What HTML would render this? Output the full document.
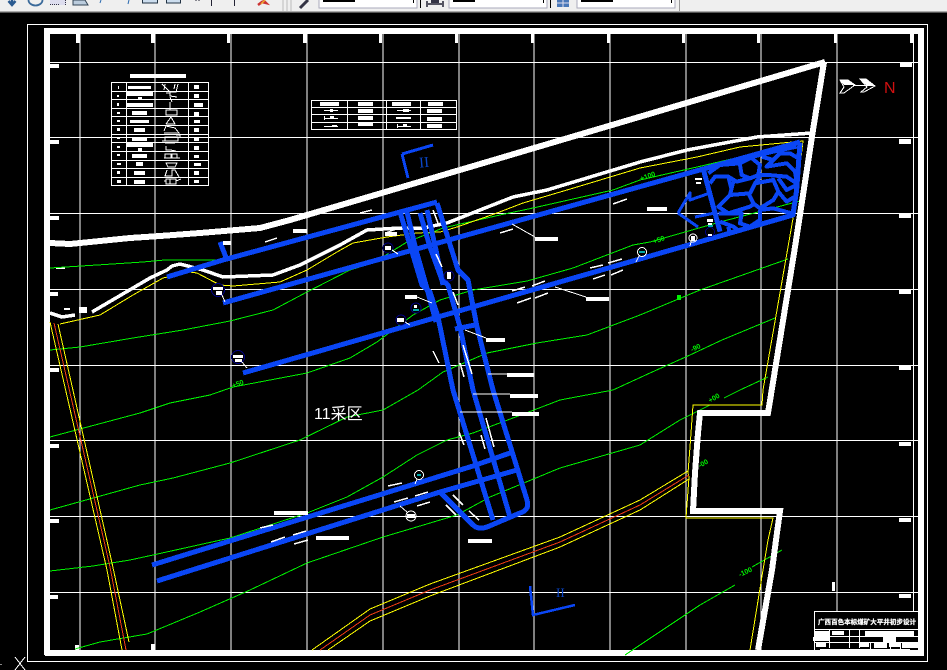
<!DOCTYPE html>
<html><head><meta charset="utf-8"><style>
html,body{margin:0;padding:0;background:#000;width:947px;height:670px;overflow:hidden}
svg{display:block}
path,rect,circle{shape-rendering:crispEdges}
.aa path,.aa rect{shape-rendering:auto}
text{font-family:"Liberation Sans","Noto Sans CJK SC",sans-serif}
</style></head><body>
<svg width="947" height="670" viewBox="0 0 947 670" xmlns="http://www.w3.org/2000/svg">
<rect width="947" height="670" fill="#000"/>
<!-- toolbar -->
<g class="aa">
<rect width="947" height="11" fill="#efefef"/>
<rect y="11" width="947" height="1" fill="#aaa"/>
<rect y="12" width="947" height="1" fill="#555"/>
<g fill="#fff" stroke="#aab" stroke-width="1">
<rect x="319" y="-2" width="98" height="10"/><rect x="449" y="-2" width="98" height="10"/><rect x="577" y="-2" width="98" height="10"/>
</g>
<rect x="679" y="0" width="1" height="11" fill="#999"/>
<g fill="#000"><rect x="323" y="0" width="32" height="2"/><rect x="453" y="0" width="22" height="2"/><rect x="581" y="0" width="32" height="2"/><rect x="413" y="0" width="1" height="3"/><rect x="543" y="0" width="1" height="3"/><rect x="671" y="0" width="1" height="3"/><rect x="420" y="0" width="1" height="8"/><rect x="550" y="0" width="1" height="8"/></g>
<path d="M12 0V4M8.5 1L12 5L15.5 1" stroke="#2a5a90" stroke-width="2.5" fill="none"/>
<path d="M28.5 0A7 5.5 0 0 0 42.5 0" stroke="#3a6a9a" stroke-width="1.8" fill="none"/>
<rect x="50" y="0" width="16" height="5" fill="#dde"/><path d="M50 4.5H60M65.5 0V5" stroke="#334" stroke-dasharray="1 1" stroke-width="1" fill="none"/>
<path d="M73 0H85L88 5H73Z" fill="#bcd" stroke="#345" stroke-width="1"/>
<path d="M101 0L100 3M129 0L128 4" stroke="#2a6ab0" stroke-width="1" fill="none"/>
<rect x="142.5" y="-2" width="15" height="5" fill="#cde" stroke="#234"/><rect x="166.5" y="-2" width="14" height="5" fill="#cde" stroke="#234"/>
<path d="M196 0V1M199 0V1M211.5 0V6M234.5 0V6" stroke="#223" stroke-width="1" fill="none"/>
<path d="M258 5L262 2L266 3L263 0" stroke="#c33" stroke-width="2.5" fill="none"/><path d="M261 4L265 0" stroke="#ea3" stroke-width="1.5" fill="none"/>
<path d="M283 0V11M287 0V11M291 0V11" stroke="#bbb" stroke-width="1" fill="none"/>
<path d="M300 8L308 0" stroke="#334" stroke-width="3" fill="none"/>
<path d="M427 1V7M443 1V7M428 4H442" stroke="#223" stroke-width="1.5" fill="none"/><rect x="431" y="0" width="8" height="3" fill="#334"/>
<rect x="557" y="0" width="12" height="7" fill="#4a78b8"/><path d="M557 3H569M563 0V7" stroke="#dde" stroke-width="1" fill="none"/>
</g>

<!-- grid -->
<g stroke="#fff" stroke-width="1" fill="none">
<path d="M80 34V650M155 34V650M231 34V650M307 34V650M383 34V650M459 34V650M534 34V650M610 34V650M686 34V650M761 34V650M837 34V650M913.5 34V650"/>
<path d="M50 62.5H918M50 137.5H918M50 213.5H918M50 289.5H918M50 365.5H918M50 440.5H918M50 516.5H918M50 592.5H918"/>
<rect x="27.5" y="24.5" width="900" height="637"/>
</g>
<!-- thick frame -->
<rect x="44" y="28" width="880" height="6" fill="#fff"/>
<rect x="44" y="28" width="6" height="627" fill="#fff"/>
<rect x="918" y="28" width="6" height="627" fill="#fff"/>
<rect x="45" y="650" width="879" height="6" fill="#fff"/>
<!-- ticks -->
<g fill="#fff">
<rect x="76" y="34" width="4" height="9"/><rect x="151" y="34" width="4" height="9"/><rect x="227" y="34" width="3" height="9"/><rect x="303" y="34" width="4" height="9"/><rect x="379" y="34" width="3" height="9"/><rect x="455" y="34" width="3" height="9"/><rect x="531" y="34" width="3" height="9"/><rect x="607" y="34" width="3" height="9"/><rect x="682" y="34" width="3" height="9"/><rect x="757" y="34" width="3" height="9"/><rect x="834" y="34" width="3" height="9"/><rect x="910" y="34" width="3" height="9"/>
<rect x="50" y="64" width="9" height="4"/><rect x="50" y="140" width="9" height="4"/><rect x="50" y="216" width="9" height="4"/><rect x="50" y="292" width="8" height="4"/><rect x="50" y="368" width="9" height="4"/><rect x="50" y="444" width="9" height="4"/><rect x="50" y="519" width="9" height="4"/><rect x="50" y="595" width="8" height="4"/>
<rect x="900" y="63" width="12" height="4"/><rect x="899" y="139" width="12" height="5"/><rect x="899" y="214" width="12" height="4"/><rect x="899" y="290" width="12" height="4"/><rect x="899" y="366" width="12" height="4"/><rect x="899" y="442" width="12" height="4"/><rect x="899" y="518" width="12" height="4"/><rect x="899" y="594" width="12" height="4"/>
<rect x="75" y="645" width="4" height="5"/><rect x="151" y="644" width="4" height="6"/><rect x="832" y="582" width="3" height="9"/>
<rect x="56" y="267" width="9" height="2"/><rect x="79" y="307" width="8" height="6"/><rect x="64" y="308" width="6" height="2"/>
</g>

<!-- green contours -->
<g stroke="#00f000" stroke-width="1" fill="none">
<path d="M50 268L97 265L143 262L165 260H217"/>
<path d="M50 350L80 347L133 338L183 330L230 321L273 310L307 292L350 270L373 263L407 242L443 228L500 215L533 208L613 190L640 180L697 167L800 143"/>
<path d="M50 437L140 413L170 403L210 395L233 387L307 373L350 358L377 342L413 315L440 300L473 290L527 281L573 268L633 245L650 242L720 222L800 201"/>
<path d="M50 510L140 485L173 478L230 463L300 440L347 417L383 410L418 390L443 372L487 353L537 343L587 335L640 315L700 290L788 259"/>
<path d="M50 571L93 566L130 560L153 555L230 538L307 513L347 497L383 477L417 455L447 440L473 433L513 418L560 400L613 390L650 373L690 355L722 340L775 318"/>
<path d="M75 649L100 642L147 634L200 612L250 590L307 563L383 537L457 515L490 497L560 468L640 445L680 420L710 405M724 398L740 390L768 377"/>
<path d="M625 655L700 605L735 585M752 567L782 550"/>
</g>
<g font-size="7" fill="#00f000" font-weight="bold">
<text x="641" y="181" transform="rotate(-20 641 181)">+100</text>
<text x="654" y="244" transform="rotate(-20 654 244)">+50</text>
<text x="233" y="388" transform="rotate(-20 233 388)">+50</text>
<text x="692" y="352" transform="rotate(-25 692 352)">-90</text>
<text x="710" y="403" transform="rotate(-30 710 403)">+00</text>
<text x="700" y="468" transform="rotate(-30 700 468)">-00</text>
<text x="740" y="577" transform="rotate(-25 740 577)">-100</text>
</g>
<rect x="677" y="295" width="4" height="5" fill="#00f000"/>

<!-- yellow -->
<g stroke="#ffff00" stroke-width="1" fill="none">
<path d="M60 324L100 315L133 295L163 278L190 272L197 273L220 285L233 286L280 282L307 270L337 252L353 243L387 237L417 233L440 232L457 227L497 213L523 203L567 190L640 168L697 157L740 147L803 141L795 207L788 247L763 390L762 405H693L690 447L688 473L689 477L686 518H773L768 540L763 570L750 650"/>
<path d="M50 322L107 570L122 650"/>
<path d="M58 324L112 563L129 642"/>
<path d="M688 471L640 500L560 537L430 584L370 609L312 650"/>
<path d="M689 479L640 510L560 547L430 596L370 621L328 650"/>
</g>
<g stroke="#f03c14" stroke-width="1" fill="none">
<path d="M54 323L110 567L126 650"/>
<path d="M689 475L640 505L560 542L430 590L370 615L320 650"/>
</g>

<!-- white boundary -->
<g stroke="#fff" fill="none" stroke-linejoin="miter">
<path stroke-width="6" d="M50 243L70 244L100 241L130 238L160 236L200 233L260 228L290 220L375 195L470 167L825 62"/>
<path stroke-width="6" d="M824 62L813 130L795 247L768 413H700L698 433L695 473L693 511H780L776 540L772 570L758 650"/>
<path stroke-width="3.5" d="M812 133L757 137L687 150L640 162L547 190L513 197L480 210L447 223L423 228L400 228L367 230L340 245L300 265L273 275L223 277L203 270L180 264L172 266L167 270L150 278L92 312M50 313L62 317L75 315"/>
</g>

<!-- blue drifts -->
<g stroke="#0a46f5" fill="none" stroke-width="5" stroke-linejoin="round" stroke-linecap="butt">
<path d="M167 277L223 260L437 202"/>
<path d="M220 242L227 260"/>
<path d="M223 303L800 142"/>
<path d="M243 373L793 215"/>
<path d="M400 212L422 285L430 292L438 317L453 390L493 520"/>
<path d="M420 213L430 247L442 280L448 285L460 327L473 390L510 517"/>
<path d="M437 203L458 270L468 280L477 327L493 390L527 500Q530 510 520 513L487 527Q478 530 473 525L440 492"/>
<path d="M407 212L416 250L426 285L436 322M427 210L436 250L443 285"/>
<path d="M455 329L475 325"/>
<path d="M510 453L473 466L152 565"/>
<path d="M517 470L440 492L157 581"/>
<path d="M678 213L690 193L690 200L710 193M678 213L698 227M695 217L715 213" stroke-width="3"/>
</g>
<!-- mesh -->
<g transform="translate(640 50) scale(.3333)" stroke="#0a46f5" fill="none" stroke-width="12" stroke-linejoin="round">
<path stroke-width="15" d="M190 358L240 545M480 278L470 420L458 500"/>
<path d="M205 370L240 345L300 340L340 320L400 305L470 290"/>
<path d="M330 320L360 345L355 375L330 385L305 375L300 345"/>
<path d="M365 320L400 330L420 310L450 310L475 325"/>
<path d="M400 330L380 350L440 340L465 365L470 395"/>
<path d="M355 375L385 375L440 380L470 400"/>
<path d="M415 385L440 420L470 405"/>
<path d="M265 380L290 395L330 385"/>
<path d="M280 395L270 435L330 430L345 400L360 380"/>
<path d="M345 400L400 390L415 425L400 450L360 475L340 460L325 430"/>
<path d="M270 435L235 470L265 490L330 470L345 460"/>
<path d="M415 425L440 455L465 440"/>
<path d="M210 400L225 380L265 380L275 420"/>
<path d="M235 490L305 490L300 520L330 530L360 510L360 480"/>
<path d="M360 480L400 475L455 490"/>
<path d="M240 515L280 530L300 545M265 530L270 555"/>
</g>
<path d="M402 154L433 145M402 154L408 178" stroke="#0a46f5" stroke-width="3" fill="none"/>
<path d="M530 586L533 615L575 605" stroke="#0a46f5" stroke-width="2.5" fill="none"/>
<text x="419" y="167" font-size="15" fill="#0a46c8" style='font-family:"Liberation Serif",serif' transform="rotate(-5 426 162)">II</text>
<text x="556" y="597" font-size="13" fill="#0a46c8" style='font-family:"Liberation Serif",serif'>II</text>

<!-- white leaders & labels -->
<g stroke="#fff" stroke-width="1" fill="none">
<path d="M512 224L535 237M555 287L586 297M417 297L432 303M465 330L486 338M488 374H507M473 394H510M460 412H512M400 228L385 233"/>
</g>
<g fill="#fff">
<rect x="293" y="229" width="14" height="4"/><rect x="223" y="241" width="8" height="4"/><rect x="535" y="237" width="23" height="4"/><rect x="586" y="297" width="23" height="4"/><rect x="405" y="295" width="12" height="4"/><rect x="486" y="338" width="19" height="4"/><rect x="507" y="373" width="27" height="4"/><rect x="510" y="394" width="28" height="4"/><rect x="512" y="412" width="27" height="4"/><rect x="274" y="511" width="34" height="4"/><rect x="316" y="536" width="33" height="4"/><rect x="468" y="539" width="24" height="4"/><rect x="647" y="207" width="20" height="4"/><rect x="385" y="232" width="12" height="4"/>
</g>
<!-- small arrows -->
<g stroke="#fff" stroke-width="1.5" fill="none">
<path d="M500 233L513 229M613 204L627 199M590 268L603 265M608 263L622 259M593 279L605 275M611 275L623 270M512 291L525 287M532 286L545 281M517 303L531 298M535 298L548 293M436 254L442 267M433 351L439 363M463 345L472 374M460 363L464 377M453 292L458 305M433 210L438 223M265 242L277 238M388 486L402 483M415 496L428 492M394 502L408 498M417 506L430 502M260 528L273 525M271 542L285 537M293 535L306 531M294 544L308 540M453 495L463 505M446 505L456 515M469 511L479 520M459 432L464 445M481 435L485 449M486 418L494 447M360 213L372 210"/>
</g>
<!-- markers -->
<g fill="#000" stroke="#000080" stroke-width="1">
<circle cx="218" cy="290" r="6.5"/><circle cx="238" cy="357" r="6.5"/><circle cx="388" cy="248" r="5"/><circle cx="416" cy="308" r="5"/><circle cx="401" cy="320" r="5"/><circle cx="449" cy="276" r="5"/><circle cx="710" cy="232" r="4.5"/>
</g>
<g fill="none" stroke="#fff" stroke-width="1">
<circle cx="642" cy="252" r="4.5"/><circle cx="419" cy="475" r="4.5"/><circle cx="411" cy="516" r="5"/><circle cx="693" cy="238" r="4"/>
<path d="M639 256L636 262M417 479L415 484M407 512L400 506M691 242L690 246M392 250L398 254M405 322L410 325M222 295L225 302M242 362L247 368"/>
</g>
<g fill="#fff">
<rect x="213" y="287" width="10" height="3"/><rect x="216" y="291" width="6" height="4"/>
<rect x="233" y="355" width="10" height="3"/><rect x="235" y="359" width="7" height="3"/>
<rect x="385" y="246" width="6" height="4"/><rect x="397" y="318" width="7" height="4"/><rect x="447" y="272" width="4" height="7"/>
<rect x="414" y="305" width="3" height="3"/><rect x="407" y="514" width="8" height="4"/>
<rect x="695" y="178" width="7" height="2"/><rect x="696" y="182" width="5" height="2"/><rect x="707" y="219" width="6" height="3"/><rect x="708" y="223" width="4" height="2"/><rect x="691" y="236" width="4" height="5"/><rect x="708" y="234" width="4" height="2"/>
</g>
<g fill="#0aa"><rect x="413" y="309" width="6" height="2"/><rect x="639" y="251" width="6" height="2"/><rect x="417" y="474" width="4" height="2"/><rect x="708" y="225" width="5" height="2"/></g>

<!-- legend table -->
<g stroke="#fff" stroke-width="1" fill="none">
<rect x="111.5" y="82.5" width="97" height="103"/>
<path d="M126.5 82V186M155 82V186M188.5 82V186"/>
<path d="M111 91.5H209M111 99.5H209M111 108.5H209M111 116.5H209M111 125.5H209M111 134.5H209M111 142.5H209M111 151.5H209M111 160.5H209M111 168.5H209M111 177.5H209"/>
<rect x="311.5" y="100.5" width="145" height="29"/>
<path d="M347.5 100V130M386.5 100V130M420.5 100V130M311 107.5H457M311 114.5H457M311 122.5H457"/>
</g>
<g fill="#fff">
<rect x="130" y="74" width="56" height="4"/>
<rect x="128" y="86" width="23" height="3"/><rect x="127" y="92" width="26" height="4"/><rect x="138" y="97" width="4" height="3"/><rect x="127" y="103" width="26" height="4"/><rect x="132" y="111" width="15" height="4"/><rect x="130" y="120" width="19" height="3"/><rect x="134" y="128" width="11" height="4"/><rect x="132" y="137" width="15" height="4"/><rect x="127" y="143" width="26" height="4"/><rect x="138" y="148" width="4" height="3"/><rect x="132" y="154" width="15" height="4"/><rect x="136" y="162" width="7" height="4"/><rect x="134" y="171" width="11" height="4"/><rect x="134" y="180" width="11" height="4"/>
<rect x="194" y="85" width="5" height="4"/><rect x="194" y="94" width="5" height="4"/><rect x="194" y="103" width="9" height="4"/><rect x="194" y="112" width="5" height="4"/><rect x="194" y="120" width="6" height="3"/><rect x="194" y="128" width="5" height="4"/><rect x="194" y="138" width="5" height="3"/><rect x="194" y="146" width="5" height="4"/><rect x="194" y="155" width="5" height="3"/><rect x="194" y="163" width="7" height="3"/><rect x="194" y="171" width="5" height="4"/><rect x="194" y="180" width="5" height="3"/>
<rect x="118" y="86" width="1" height="3"/><rect x="117" y="95" width="2" height="2"/><rect x="117" y="103" width="2" height="3"/><rect x="117" y="112" width="3" height="2"/><rect x="117" y="120" width="3" height="2"/><rect x="117" y="128" width="3" height="3"/><rect x="117" y="137" width="3" height="2"/><rect x="117" y="146" width="3" height="2"/><rect x="117" y="154" width="3" height="2"/><rect x="117" y="163" width="4" height="2"/><rect x="117" y="171" width="3" height="3"/><rect x="117" y="180" width="4" height="3"/>
<rect x="320" y="102" width="19" height="4"/><rect x="358" y="102" width="15" height="4"/><rect x="392" y="102" width="19" height="4"/><rect x="428" y="102" width="15" height="4"/>
<rect x="358" y="109" width="15" height="4"/><rect x="427" y="109" width="15" height="4"/><rect x="358" y="116" width="15" height="4"/><rect x="427" y="117" width="15" height="4"/><rect x="358" y="123" width="15" height="3"/><rect x="427" y="124" width="15" height="4"/>
<rect x="396" y="117" width="15" height="2"/>
<rect x="324" y="110" width="14" height="1"/><rect x="330" y="109" width="3" height="3"/><rect x="397" y="110" width="14" height="1"/><rect x="403" y="109" width="6" height="3"/>
<rect x="324" y="118" width="14" height="1"/><rect x="324" y="116" width="1" height="4"/><rect x="330" y="116" width="4" height="3"/>
<rect x="324" y="126" width="14" height="1"/><rect x="332" y="125" width="5" height="2"/><rect x="397" y="126" width="14" height="1"/><rect x="397" y="124" width="1" height="4"/><rect x="403" y="124" width="4" height="3"/>
</g>
<!-- legend symbols -->
<g stroke="#fff" stroke-width="1" fill="none">
<path d="M162 84L170 92H176L178 84M164 90L165 84M175 84L174 89"/>
<path d="M166 93H170V96L177 97M170 97L172 102M170 102V108"/>
<rect x="166" y="110" width="11" height="5"/><path d="M170 108V110"/>
<path d="M166 124L171 117L175 124H166"/>
<path d="M164 131L166 126L175 128L179 133H164"/>
<rect x="165" y="137" width="13" height="4"/><path d="M162 141H170M176 135H180V138"/>
<path d="M165 143H175M166 146V150H172M170 150L176 151"/>
<rect x="165" y="154" width="6" height="4"/><rect x="172" y="154" width="5" height="4"/><path d="M164 158H180"/>
<path d="M166 163H177L175 167H168Z"/>
<path d="M167 170L165 176H172L172 170H175L179 177"/>
<rect x="166" y="179" width="10" height="5"/><path d="M170 179V184M176 181L181 179M164 181H166"/>
</g>

<!-- north arrow -->
<g stroke="#fff" stroke-width="1" fill="none">
<path d="M853 85.5H875"/>
<path d="M840 93L844 87L840 80H848L855 85L844 93Z"/>
<path d="M861 92L867 87L860 79H866L875 86L864 92Z"/>
</g>
<path d="M840 80H848L855 85H844Z M860 79H866L875 86H867Z" fill="#fff"/>
<text x="884" y="93" font-size="16" fill="#d01010">N</text>

<!-- 11 mining area -->
<text x="314" y="419" font-size="16" fill="#fff">11采区</text>

<!-- title block -->
<rect x="814" y="611" width="104" height="39" fill="#000"/>
<g stroke="#fff" fill="none" stroke-width="1">
<path d="M814.5 611V650M814 611.5H918M814 629.5H918M829.5 630V648M849.5 630V648M859.5 630V648M814 636.5H918M814 642.5H918M870.5 642V650M890.5 642V650M900.5 642V650"/>
</g>
<text x="818" y="624" font-size="6.5" font-weight="bold" fill="#fff" stroke="#fff" stroke-width=".25" textLength="98" lengthAdjust="spacing">广西百色本标煤矿大平井初步设计</text>
<g fill="#fff">
<rect x="814" y="631" width="15" height="5"/><rect x="832" y="631" width="12" height="4"/><rect x="865" y="631" width="49" height="5"/><rect x="813" y="637" width="16" height="4"/><rect x="883" y="637" width="13" height="5"/><rect x="816" y="643" width="10" height="4"/><rect x="859" y="643" width="10" height="4"/><rect x="874" y="643" width="13" height="5"/><rect x="889" y="643" width="11" height="4"/><rect x="902" y="643" width="16" height="5"/><rect x="820" y="649" width="90" height="2"/>
</g>

<!-- UCS icon -->
<path d="M15 657L25 670M25 657L15 670" stroke="#fff" stroke-width="1" fill="none"/>
<rect x="0" y="664" width="2" height="1" fill="#888"/>
</svg>
</body></html>
